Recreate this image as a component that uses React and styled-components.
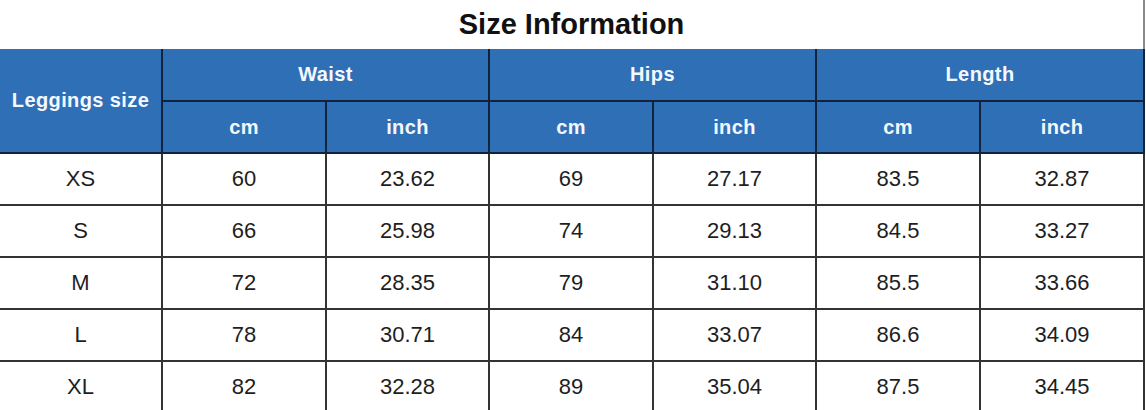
import * as React from "react";
import styled, { createGlobalStyle } from "styled-components";

const GlobalStyle = createGlobalStyle`
  body {
    margin: 0;
    background: #ffffff;
    font-family: "Liberation Sans", Arial, sans-serif;
  }
`;

const Table = styled.table`
  width: 1144px;
  border-collapse: collapse;
  table-layout: fixed;
`;

const Col = styled.col`
  width: ${(p) => p.$w}px;
`;

const TitleCell = styled.th`
  height: 49px;
  padding: 0;
  font-size: 29px;
  font-weight: 700;
  color: #111;
  text-align: center;
  vertical-align: middle;
  border-right: 2px solid #8a8a8a;
`;

const HeadCell = styled.th`
  height: ${(p) => (p.$tall ? "51px" : "50px")};
  padding: 0;
  background: #2f6fb5;
  color: #f4f8ff;
  font-size: 20px;
  font-weight: 700;
  letter-spacing: 0.4px;
  text-align: center;
  vertical-align: middle;
  border: 2px solid #10233d;
  border-left: ${(p) => (p.$first ? "none" : "2px solid #10233d")};
  border-top: none;
`;

const Cell = styled.td`
  height: 50px;
  padding: 0;
  font-size: 22px;
  color: #1e1e1e;
  text-align: center;
  vertical-align: middle;
  border: 2px solid #333;
  border-left: ${(p) => (p.$first ? "none" : "2px solid #333")};
  border-bottom: ${(p) => (p.$last ? "none" : "2px solid #333")};
`;

const widths = [162, 164, 163, 164, 163, 164, 164];

const rows = [
  ["XS", "60", "23.62", "69", "27.17", "83.5", "32.87"],
  ["S", "66", "25.98", "74", "29.13", "84.5", "33.27"],
  ["M", "72", "28.35", "79", "31.10", "85.5", "33.66"],
  ["L", "78", "30.71", "84", "33.07", "86.6", "34.09"],
  ["XL", "82", "32.28", "89", "35.04", "87.5", "34.45"],
];

export default function App() {
  return (
    <>
      <GlobalStyle />
      <Table>
        <colgroup>
          {widths.map((w, i) => (
            <Col key={i} $w={w} />
          ))}
        </colgroup>
        <thead>
          <tr>
            <TitleCell colSpan={7}>Size Information</TitleCell>
          </tr>
          <tr>
            <HeadCell rowSpan={2} $first>
              Leggings size
            </HeadCell>
            <HeadCell colSpan={2} $tall>Waist</HeadCell>
            <HeadCell colSpan={2} $tall>Hips</HeadCell>
            <HeadCell colSpan={2} $tall>Length</HeadCell>
          </tr>
          <tr>
            <HeadCell>cm</HeadCell>
            <HeadCell>inch</HeadCell>
            <HeadCell>cm</HeadCell>
            <HeadCell>inch</HeadCell>
            <HeadCell>cm</HeadCell>
            <HeadCell>inch</HeadCell>
          </tr>
        </thead>
        <tbody>
          {rows.map((row, i) => (
            <tr key={row[0]}>
              {row.map((v, j) => (
                <Cell key={j} $first={j === 0} $last={i === rows.length - 1}>
                  {v}
                </Cell>
              ))}
            </tr>
          ))}
        </tbody>
      </Table>
    </>
  );
}
